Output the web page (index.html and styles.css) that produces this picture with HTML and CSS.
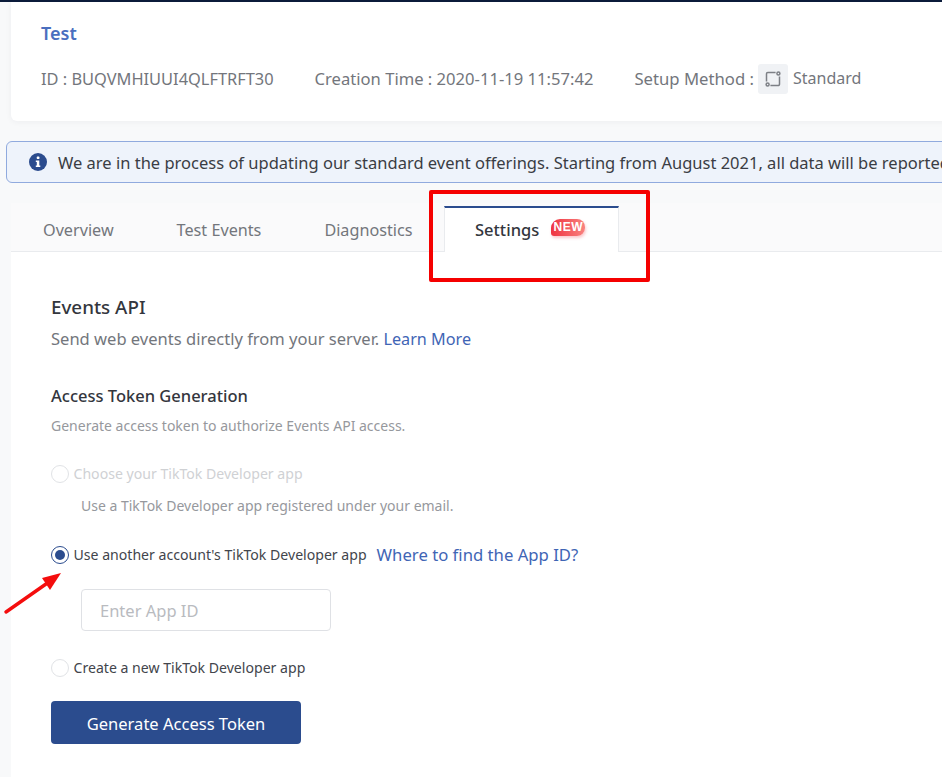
FILE: index.html
```html
<!DOCTYPE html>
<html lang="en">
<head>
<meta charset="utf-8">
<title>Test</title>
<link rel="stylesheet" href="styles.css">
</head>
<body>
<div class="page">
  <header class="summary">
    <a class="name">Test</a>
    <div class="meta">
      <span class="meta-text meta-id">ID : BUQVMHIUUI4QLFTRFT30</span>
      <span class="meta-text meta-time">Creation Time : 2020-11-19 11:57:42</span>
      <span class="meta-text meta-setup">Setup Method :</span>
      <span class="setup-icon">
        <svg width="16" height="16" viewBox="0 0 16 16" fill="none" stroke="#7d8086" stroke-width="1.5">
          <path d="M10.6 1.5H2.8a1.3 1.3 0 0 0-1.3 1.3v7.8M5.4 14.5h7.8a1.3 1.3 0 0 0 1.3-1.3V5.4"/>
          <circle cx="13.4" cy="2.6" r="1.5"/>
          <circle cx="2.6" cy="13.4" r="1.5"/>
        </svg>
      </span>
      <span class="meta-text">Standard</span>
    </div>
  </header>
  <div class="notice">
    <svg class="notice-icon" width="18" height="18" viewBox="0 0 18 18">
      <circle cx="9" cy="9" r="9" fill="#2b4c8e"/>
      <rect x="7.8" y="3.6" width="2.6" height="2.4" rx="0.6" fill="#fff"/>
      <path d="M6.8 7.4h3.5v5h1v1.6H6.8v-1.6h1v-3.4h-1z" fill="#fff"/>
    </svg>
    <span class="notice-text">We are in the process of updating our standard event offerings. Starting from August 2021, all data will be reported</span>
  </div>
  <section class="panel">
    <nav class="tabs">
      <span class="tab">Overview</span>
      <span class="tab">Test Events</span>
      <span class="tab">Diagnostics</span>
      <span class="tab tab-active">Settings<span class="badge">NEW</span></span>
    </nav>
    <div class="body">
      <h2 class="title">Events API</h2>
      <p class="lead"><span class="lead-text">Send web events directly from your server.</span> <a class="link">Learn More</a></p>
      <h3 class="subtitle">Access Token Generation</h3>
      <p class="hint">Generate access token to authorize Events API access.</p>
      <div class="option option-disabled"><span class="radio"></span><span>Choose your TikTok Developer app</span></div>
      <p class="option-note">Use a TikTok Developer app registered under your email.</p>
      <div class="option option-checked"><span class="radio radio-on"></span><span>Use another account's TikTok Developer app</span><a class="link find">Where to find the App ID?</a></div>
      <div class="field">Enter App ID</div>
      <div class="option option-new"><span class="radio"></span><span>Create a new TikTok Developer app</span></div>
      <button class="primary" type="button">Generate Access Token</button>
    </div>
  </section>
</div>
<div class="callout"></div>
<svg class="arrow" width="70" height="70" viewBox="0 0 70 70">
  <path d="M6 58 L46 30" stroke="#f40d0d" stroke-width="3.4" stroke-linecap="round"/>
  <path d="M61 19 L42 24 L50 36 Z" fill="#f40d0d"/>
</svg>
</body>
</html>
```
FILE: styles.css
```css
* { box-sizing: border-box; }
html, body { margin: 0; padding: 0; }
body {
  width: 942px;
  height: 777px;
  overflow: hidden;
  background: #f8f9fa;
  font-family: "Noto Sans", "Open Sans", sans-serif;
  color: #33363d;
  position: relative;
  border-top: 2px solid #0b1b3a;
}
.page { padding-left: 11px; width: 1400px; }
.summary {
  width: 1389px;
  height: 119px;
  background: #fff;
  border-radius: 0 0 6px 6px;
  box-shadow: 0 1px 6px rgba(30, 40, 60, .05);
  padding: 18px 0 0 30px;
}
.name {
  display: block;
  font-size: 18px;
  line-height: 26px;
  font-weight: 600;
  color: #4a6fbf;
}
.meta {
  display: flex;
  align-items: center;
  margin-top: 18px;
  height: 30px;
  font-size: 16px;
  color: #73767c;
}
.meta-text { padding-bottom: 2px; }
.meta-id { margin-right: 41px; font-size: 16.4px; }
.meta-time { margin-right: 41px; font-size: 16.6px; }
.meta-setup { font-size: 16.7px; }
.setup-icon {
  display: flex;
  align-items: center;
  justify-content: center;
  width: 30px;
  height: 30px;
  margin: 0 5px 0 4px;
  border-radius: 3px;
  background: #f0f2f5;
}
.notice {
  display: flex;
  align-items: center;
  width: 1300px;
  height: 42px;
  margin: 20px 0 0 -5px;
  padding-left: 22px;
  background: #eef3fb;
  border: 1px solid #90aade;
  border-radius: 6px;
  white-space: nowrap;
  font-size: 16.5px;
  color: #3a3d44;
}
.notice-icon { flex: none; margin-right: 11px; }
.panel {
  width: 1389px;
  margin-top: 20px;
  background: #fff;
  height: 600px;
}
.tabs {
  display: flex;
  height: 49px;
  background: #fafafb;
  border-bottom: 1px solid #e9ebee;
  padding: 3px 0 0 0;
}
.tab {
  display: flex;
  align-items: center;
  height: 46px;
  padding: 2px 31.5px 0;
  font-size: 16.2px;
  color: #73767c;
}
.tabs .tab:first-child { padding-left: 32px; }
.tab-active {
  width: 175px;
  height: 46px;
  padding: 0 0 2px 30px;
  background: #fff;
  color: #33363d;
  font-size: 16.5px;
  font-weight: 500;
  border-top: 2px solid #2b4c8e;
  border-left: 1px solid #e9ebee;
  border-right: 1px solid #e9ebee;
}
.badge {
  display: inline-block;
  margin: -4px 0 0 12px;
  width: 34px;
  height: 17px;
  line-height: 17px;
  text-align: center;
  font-family: "Liberation Sans Narrow", "Liberation Sans", sans-serif;
  font-size: 12px;
  font-weight: 700;
  letter-spacing: .5px;
  color: #fff;
  background: linear-gradient(90deg, #ef3340, #f9827f);
  border-radius: 9px 8px 8px 3px;
  box-shadow: 1px 2px 3px rgba(240, 80, 90, .3);
}
.body { padding: 42px 0 0 40px; }
.title {
  margin: 0;
  font-size: 18.8px;
  line-height: 26px;
  font-weight: 500;
  color: #33363d;
}
.lead {
  margin: 7px 0 0;
  font-size: 16.2px;
  line-height: 24px;
  color: #73767c;
}
.lead-text { font-size: 16.55px; }
.link { color: #3f65b5; }
.subtitle {
  margin: 33px 0 0;
  font-size: 16.5px;
  line-height: 24px;
  font-weight: 500;
  color: #33363d;
}
.hint {
  margin: 8px 0 0;
  font-size: 14px;
  line-height: 20px;
  color: #96989d;
}
.option {
  display: flex;
  align-items: center;
  font-size: 14.1px;
  line-height: 20px;
  color: #42454c;
}
.option-disabled { margin-top: 28px; color: #cfd1d4; }
.option-note {
  margin: 12px 0 0 30px;
  font-size: 14px;
  line-height: 20px;
  color: #96989d;
}
.option-checked { margin-top: 29px; }
.option-new { margin-top: 27px; }
.radio {
  width: 18px;
  height: 18px;
  margin-right: 4.5px;
  border: 1px solid #e1e3e6;
  border-radius: 50%;
  background: #fff;
  flex: none;
}
.radio-on {
  border-color: #2b4c8e;
  display: flex;
  align-items: center;
  justify-content: center;
}
.radio-on::after {
  content: "";
  width: 10px;
  height: 10px;
  border-radius: 50%;
  background: #2b4c8e;
}
.find { margin-left: 10px; font-size: 16.7px; }
.field {
  width: 250px;
  height: 42px;
  margin: 24px 0 0 30px;
  padding: 1px 0 0 18px;
  border: 1px solid #dfe1e5;
  border-radius: 4px;
  font-size: 16.5px;
  line-height: 40px;
  color: #b9bbbf;
}
.primary {
  display: block;
  width: 250px;
  height: 43px;
  margin-top: 23px;
  padding: 2px 0 0;
  border: 0;
  border-radius: 4px;
  background: #2b4c8e;
  color: #fff;
  font-family: inherit;
  font-size: 16.55px;
}
.callout {
  position: absolute;
  left: 429px;
  top: 188px;
  width: 221px;
  height: 92px;
  border: 4px solid #f50000;
  border-radius: 2px;
}
.arrow {
  position: absolute;
  left: 0;
  top: 552px;
}
```
